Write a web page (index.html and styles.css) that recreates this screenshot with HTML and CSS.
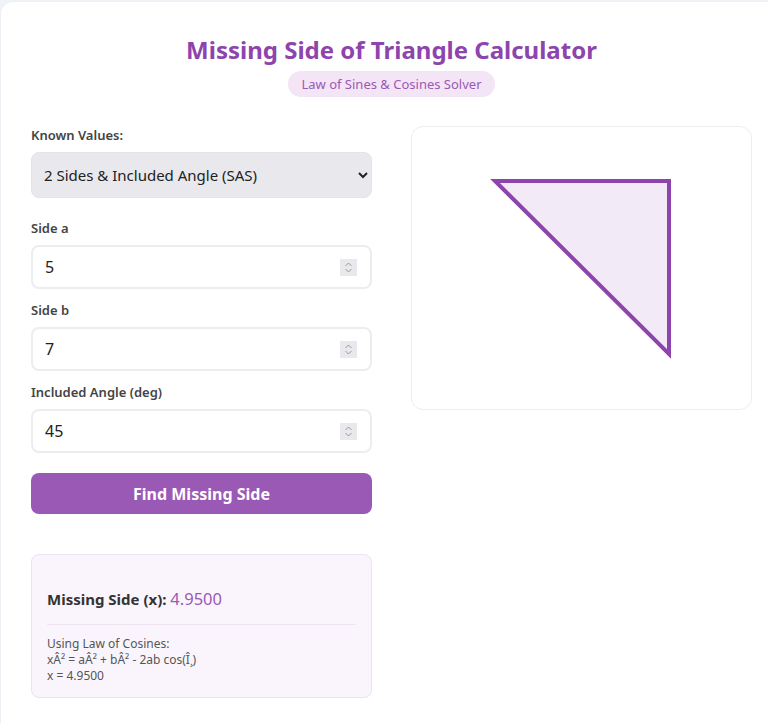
FILE: index.html
```html
<!DOCTYPE html>
<html lang="en">
<head>
    <meta charset="UTF-8">
    <meta name="viewport" content="width=device-width, initial-scale=1.0">
    <title>Missing Side of Triangle Calculator</title>
    <link rel="stylesheet" href="styles.css">
</head>
<body>
    <div class="container">
        <div class="header">
            <h1>Missing Side of Triangle Calculator</h1>
            <span class="subtitle">Law of Sines &amp; Cosines Solver</span>
        </div>

        <div class="calc-grid">
            <div class="calc-form">
                <div class="form-group select-group">
                    <label for="mode">Known Values:</label>
                    <select id="mode">
                        <option>2 Sides &amp; Included Angle (SAS)</option>
                        <option>2 Angles &amp; 1 Side (ASA)</option>
                        <option>3 Sides (SSS)</option>
                    </select>
                </div>

                <div class="form-group">
                    <label for="sideA">Side a</label>
                    <div class="input-wrap">
                        <input type="number" id="sideA" value="5">
                        <span class="spinner"><svg viewBox="0 0 17 17" width="17" height="17"><path d="M5.5 7l3-3 3 3M5.5 10l3 3 3-3" fill="none" stroke="#999" stroke-width="1"/></svg></span>
                    </div>
                </div>

                <div class="form-group">
                    <label for="sideB">Side b</label>
                    <div class="input-wrap">
                        <input type="number" id="sideB" value="7">
                        <span class="spinner"><svg viewBox="0 0 17 17" width="17" height="17"><path d="M5.5 7l3-3 3 3M5.5 10l3 3 3-3" fill="none" stroke="#999" stroke-width="1"/></svg></span>
                    </div>
                </div>

                <div class="form-group">
                    <label for="angle">Included Angle (deg)</label>
                    <div class="input-wrap">
                        <input type="number" id="angle" value="45">
                        <span class="spinner"><svg viewBox="0 0 17 17" width="17" height="17"><path d="M5.5 7l3-3 3 3M5.5 10l3 3 3-3" fill="none" stroke="#999" stroke-width="1"/></svg></span>
                    </div>
                </div>

                <button class="calc-btn" id="calcBtn">Find Missing Side</button>

                <div class="result-box">
                    <div class="result-main">
                        <strong>Missing Side (x):</strong> <span class="result-value">4.9500</span>
                    </div>
                    <div class="result-steps">
                        Using Law of Cosines:<br>
                        xÂ² = aÂ² + bÂ² - 2ab cos(Î¸)<br>
                        x = 4.9500
                    </div>
                </div>
            </div>

            <div class="visual-box">
                <svg viewBox="0 0 341 283" width="341" height="283">
                    <polygon points="83,54 257,54 257,227" fill="#f3eaf7" stroke="#8e44ad" stroke-width="4"/>
                </svg>
            </div>
        </div>
    </div>
</body>
</html>
```

FILE: styles.css
```css
* {
    box-sizing: border-box;
}

body {
    font-family: "Noto Sans", "Open Sans", sans-serif;
    background-color: #f0f4f8;
    margin: 0;
    padding: 2px 0 0 1px;
    overflow: hidden;
    color: #333;
}

.container {
    width: 781px;
    background-color: #fff;
    border-radius: 12px;
    padding: 33px 30px 40px;
    box-shadow: 0 2px 10px rgba(0, 0, 0, 0.04);
}

.header {
    text-align: center;
    margin-bottom: 29px;
}

.header h1 {
    color: #8e44ad;
    font-size: 24px;
    line-height: 29px;
    margin: 0 0 7px;
    font-weight: 700;
}

.subtitle {
    display: inline-block;
    background-color: #f3e5f5;
    color: #9b59b6;
    font-size: 13px;
    line-height: 18px;
    padding: 4px 13px;
    border-radius: 14px;
}

.calc-grid {
    display: grid;
    grid-template-columns: 341px 341px;
    gap: 39px;
    align-items: start;
}

.form-group {
    margin-bottom: 12px;
}

.select-group {
    margin-bottom: 21px;
}

.form-group label {
    display: block;
    font-size: 13px;
    line-height: 18px;
    font-weight: 600;
    color: #444;
    margin-bottom: 8px;
}

.form-group select {
    width: 100%;
    height: 46px;
    padding: 0 8px;
    font-family: inherit;
    font-size: 15px;
    color: #222;
    background-color: #e9e9ed;
    border: 1px solid #e3e3e8;
    border-radius: 8px;
}

.input-wrap {
    display: flex;
    align-items: center;
    height: 44px;
    padding: 0 13px 0 12px;
    background-color: #fff;
    border: 2px solid #eceeee;
    border-radius: 8px;
}

.input-wrap input {
    flex: 1;
    min-width: 0;
    border: none;
    outline: none;
    padding: 0;
    font-family: inherit;
    font-size: 16px;
    color: #222;
    background: transparent;
    -moz-appearance: textfield;
}

.input-wrap input::-webkit-inner-spin-button,
.input-wrap input::-webkit-outer-spin-button {
    -webkit-appearance: none;
    margin: 0;
}

.spinner {
    display: flex;
    width: 17px;
    height: 17px;
    background-color: #e9e9ed;
}

.calc-btn {
    display: block;
    width: 100%;
    height: 41px;
    margin-top: 20px;
    background-color: #9b59b6;
    color: #fff;
    border: none;
    border-radius: 8px;
    font-family: inherit;
    font-size: 16px;
    font-weight: 700;
    cursor: pointer;
}

.calc-btn:hover {
    background-color: #8e44ad;
}

.result-box {
    margin-top: 40px;
    background-color: #faf5fc;
    border: 1px solid #efe0f4;
    border-radius: 8px;
    padding: 32px 15px 13px;
}

.result-main {
    font-size: 15px;
    line-height: 24px;
    padding-bottom: 13px;
    border-bottom: 1px solid #f0e6f2;
    margin-bottom: 11px;
}

.result-main strong {
    color: #333;
}

.result-value {
    color: #9b59b6;
    font-size: 16.5px;
}

.result-steps {
    font-size: 12px;
    line-height: 16px;
    color: #555;
}

.visual-box {
    height: 284px;
    border: 1px solid #eee;
    border-radius: 12px;
    background-color: #fff;
    overflow: hidden;
}

.visual-box svg {
    display: block;
}
```
